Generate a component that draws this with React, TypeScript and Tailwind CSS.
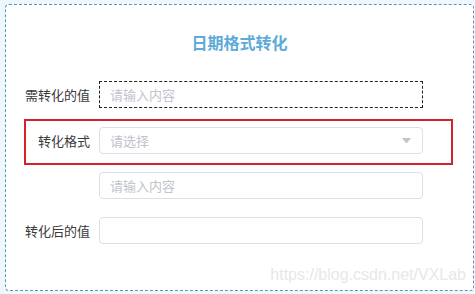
import React from 'react';

const FONT = { fontFamily: '"Microsoft YaHei", "Noto Sans CJK SC", "Noto Sans", sans-serif' };

const Field = ({ label, placeholder, dashed, select }: { label?: string; placeholder?: string; dashed?: boolean; select?: boolean }) => (
    <div className="flex items-center">
        <div className="w-[84px] shrink-0 text-right text-[13px] leading-none text-[#3a3a3a]">{label}</div>
        <div
            className={
                'ml-[9px] flex h-[27px] w-[324px] items-center justify-between px-[10px] text-[13px] text-[#c0c4cc] ' +
                (dashed ? 'border border-dashed border-[#222]' : 'rounded-[4px] border border-[#dcdfe6]')
            }
        >
            <span>{placeholder}</span>
            {select && (
                <svg width="9" height="6" viewBox="0 0 9 6" className="mr-[1px]">
                    <path d="M0 0h9L4.5 5.5z" fill="#c0c4cc" />
                </svg>
            )}
        </div>
    </div>
);

export default function App() {
    return (
        <div className="h-[294px] w-[475px] bg-[#eef7fb] pl-[5px] pt-[4px]" style={FONT}>
            <div className="relative h-[287px] w-[469px] rounded-[4px] border border-dashed border-[#4f99bd] bg-white">
                <h2 className="pt-[27px] text-center text-[16px] font-bold leading-[20px] text-[#5eaad8]">日期格式转化</h2>

                <div className="mt-[29px]">
                    <Field label="需转化的值" placeholder="请输入内容" dashed />
                </div>

                {/* annotated row */}
                <div className="relative mt-[19px]">
                    <Field label="转化格式" placeholder="请选择" select />
                    <div className="pointer-events-none absolute left-[18px] top-[-8px] h-[46px] w-[429px] border-2 border-[#d0232b]" />
                </div>

                <div className="mt-[18px]">
                    <Field placeholder="请输入内容" />
                </div>

                <div className="mt-[18px]">
                    <Field label="转化后的值" />
                </div>

                <div
                    className="absolute bottom-[7px] right-[7px] text-[16px] leading-none text-[#e8e8e8]"
                    style={{ fontFamily: '"Liberation Sans", Arial, sans-serif' }}
                >
                    https://blog.csdn.net/VXLab
                </div>
            </div>
        </div>
    );
}
